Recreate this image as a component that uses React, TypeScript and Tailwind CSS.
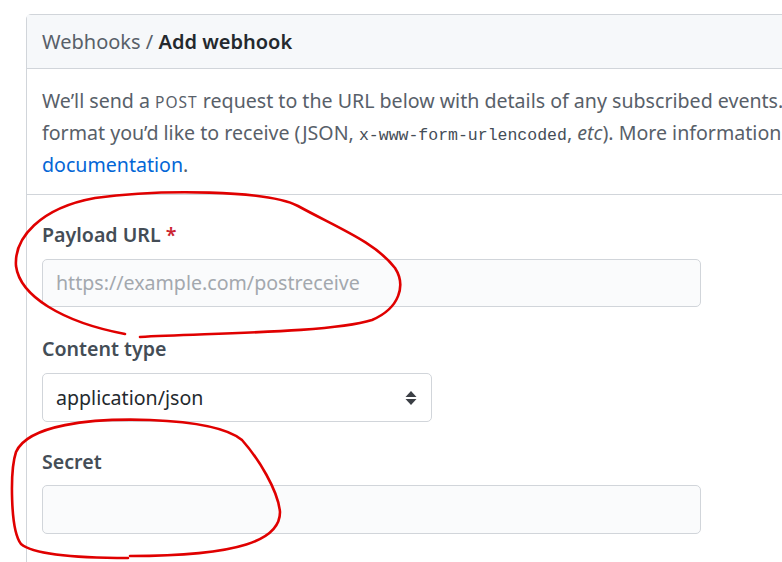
import React from "react";

const sans = { fontFamily: '"Noto Sans", "Open Sans", Arial, sans-serif' };

export default function App() {
  return (
    <div className="relative w-[782px] h-[562px] overflow-hidden bg-white" style={sans}>
      <div className="ml-[26px] mt-[14px] w-[1000px] h-[700px] border border-[#d1d5da] rounded-tl-[5px]">
        <div className="h-[54px] flex items-center pl-[15px] bg-[#f6f8fa] border-b border-[#d1d5da] text-[20px] text-[#586069]">
          <span>Webhooks /&nbsp;</span>
          <span className="font-semibold text-[#24292e]">Add webhook</span>
        </div>
        <div className="px-[15px] pt-[16px] pb-[13px] border-b border-[#d1d5da] text-[19.6px] leading-[32px] text-[#586069] whitespace-nowrap">
          We’ll send a <span className="text-[15.5px] tracking-[1px] leading-none">POST</span> request to the URL below with details of any subscribed events. You can also specify which data
          <br />
          format you’d like to receive (JSON,{" "}
          <code className="text-[16.5px] text-[#444d56] leading-none" style={{ fontFamily: '"Liberation Mono", "DejaVu Sans Mono", monospace' }}>x-www-form-urlencoded</code>
          , <em className="leading-none">etc</em>). More information can be found in our developer
          <br />
          <span className="text-[#0366d6]">documentation</span>.
        </div>
        <div className="px-[15px] pt-[25px] flex flex-col">
          <label className="text-[19.6px] leading-[30px] font-semibold text-[#444d56]">
            Payload URL <span className="text-[#cb2431]">*</span>
          </label>
          <div className="mt-[9px] w-[659px] h-[48px] rounded-[5px] border border-[#d1d5da] bg-[#fafbfc] flex items-center px-[13px] text-[19.6px] text-[#a3a8ae]">
            https://example.com/postreceive
          </div>
          <label className="mt-[27px] text-[19.6px] leading-[30px] font-semibold text-[#444d56]">Content type</label>
          <div className="mt-[9px] w-[390px] h-[49px] rounded-[5px] border border-[#d1d5da] bg-white flex items-center justify-between px-[13px] text-[19.6px] text-[#24292e]">
            <span>application/json</span>
            <svg width="12" height="16" viewBox="0 0 12 16" className="mr-[1px]">
              <path d="M6 1 L11.5 7 H0.5 Z" fill="#3b3f45" />
              <path d="M6 15 L11.5 9 H0.5 Z" fill="#3b3f45" />
            </svg>
          </div>
          <label className="mt-[25px] text-[19.6px] leading-[30px] font-semibold text-[#444d56]">Secret</label>
          <div className="mt-[8px] w-[659px] h-[49px] rounded-[5px] border border-[#d1d5da] bg-[#fafbfc]" />
        </div>
      </div>
      <svg className="absolute left-0 top-0 pointer-events-none" width="782" height="562" viewBox="0 0 782 562" fill="none">
        <path
          d="M140 337 C 210 333, 330 333, 372 320 C 400 308, 406 285, 395 268 C 375 242, 338 228, 298 206 C 268 190, 160 189, 95 198 C 40 208, 14 238, 16 266 C 20 296, 62 322, 125 334"
          stroke="#e00000"
          strokeWidth="2.6"
          strokeLinecap="round"
        />
        <path
          d="M128 558 C 90 558, 35 556, 21 544 C 10 530, 10 470, 16 452 C 28 425, 90 418, 150 420 C 200 422, 230 430, 242 440 C 258 458, 278 490, 280 512 C 280 540, 240 556, 130 556"
          stroke="#e00000"
          strokeWidth="2.6"
          strokeLinecap="round"
        />
      </svg>
    </div>
  );
}
